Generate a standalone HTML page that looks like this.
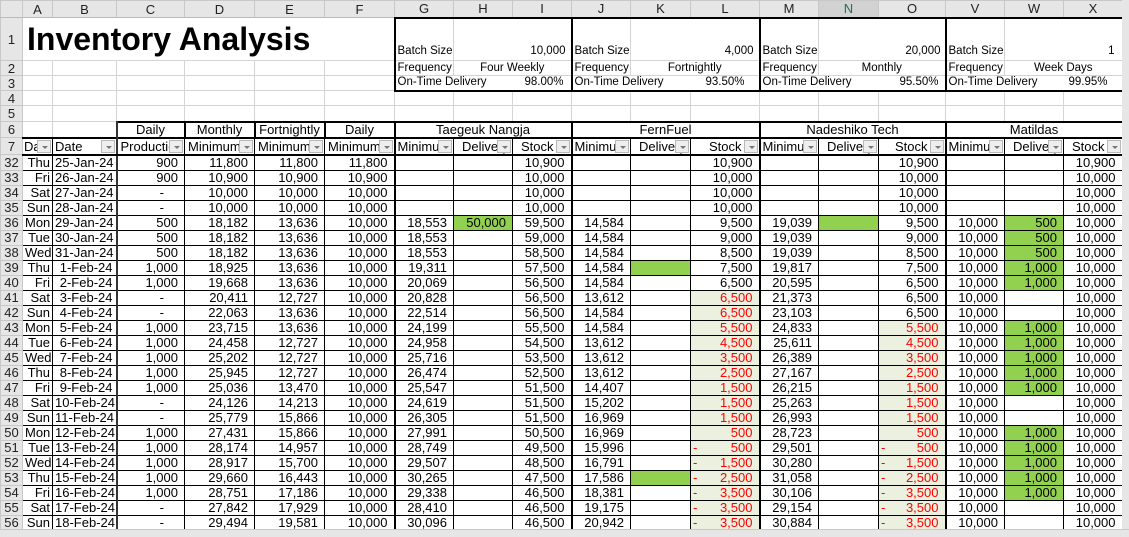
<!DOCTYPE html>
<html><head><meta charset="utf-8"><style>
body{margin:0;width:1129px;height:536px;overflow:hidden;background:#fff;font-family:"Liberation Sans",Arial,sans-serif;position:relative}
table{border-collapse:collapse;table-layout:fixed;position:absolute;left:0;top:0;width:1122px}
td,th{padding:0 2px;white-space:nowrap;overflow:hidden;font-size:13px;line-height:13px;font-weight:normal;position:relative}
th{background:#e6e6e6;color:#222;border:1px solid #c8c8c8;text-align:center;font-size:13px;padding:0}
tr.hd th{border-bottom:1px solid #bbb}
th.sel{background:#d2d2d2;color:#217346;border-bottom:2px solid #217346}
td{border:1px solid #d4d4d4}
tr.d td{border:1px solid #000;text-align:right;height:14px;padding-right:6px}
tr.d td:nth-child(2){padding-right:2px}
tr.d td:nth-child(3){border-right:2px solid #333;padding-right:3px}
tr.d td:nth-child(8),tr.d td:nth-child(11),tr.d td:nth-child(14),tr.d td:nth-child(17),tr.h7 td:nth-child(8),tr.h7 td:nth-child(11),tr.h7 td:nth-child(14),tr.h7 td:nth-child(17){border-left:2px solid #000}
tr.d td:nth-child(19),tr.h7 td:nth-child(19){border-right:2px solid #000}
tr.h7 td{border:1px solid #000;border-bottom:2px solid #000;border-top:2px solid #000;padding-right:17px}
tr.h7 td:nth-child(3){border-right:2px solid #333}
.f{position:absolute;right:1px;top:1px;width:14px;height:13px;background:#eceeef;border:1px solid #b8b8b8;box-sizing:border-box}
.f:after{content:"";position:absolute;left:4px;top:5px;border-left:3px solid transparent;border-right:3px solid transparent;border-top:3px solid #777}
.g{background:#92d050}
.s{background:#ebf1de;color:#f00}
.m{float:left;color:#f00}
.t6 td.k{border:2px solid #000;border-bottom:1px solid #000;text-align:center}
.sm{font-size:11.5px;padding-left:2px;overflow:visible}
tr.d td.dash{padding-right:20px}
</style></head><body>
<table>
<colgroup><col style="width:22px"><col style="width:30px"><col style="width:64px"><col style="width:68px"><col style="width:70px"><col style="width:70px"><col style="width:70px"><col style="width:59px"><col style="width:59px"><col style="width:59px"><col style="width:59px"><col style="width:60px"><col style="width:69px"><col style="width:59px"><col style="width:60px"><col style="width:67px"><col style="width:59px"><col style="width:59px"><col style="width:59px"></colgroup>
<tr class="hd" style="height:17px"><th style="background:#e6e6e6"></th><th>A</th><th>B</th><th>C</th><th>D</th><th>E</th><th>F</th><th>G</th><th>H</th><th>I</th><th>J</th><th>K</th><th>L</th><th>M</th><th class="sel">N</th><th>O</th><th>V</th><th>W</th><th>X</th></tr>
<tr style="height:43px"><th>1</th><td colspan="6" style="font-size:32px;font-weight:bold;line-height:32px;padding:0 0 0 4px;vertical-align:middle;border-right:none">Inventory Analysis</td>
<td class="sm" style="border-left:2px solid #000;border-top:2px solid #000;vertical-align:bottom;padding-bottom:2px">Batch Size</td><td colspan="2" class="sm" style="text-align:right;border-top:2px solid #000;border-right:2px solid #000;vertical-align:bottom;padding:0 5px 2px 0">10,000</td>
<td class="sm" style="border-top:2px solid #000;vertical-align:bottom;padding-bottom:2px">Batch Size</td><td colspan="2" class="sm" style="text-align:right;border-top:2px solid #000;border-right:2px solid #000;vertical-align:bottom;padding:0 5px 2px 0">4,000</td>
<td class="sm" style="border-top:2px solid #000;vertical-align:bottom;padding-bottom:2px">Batch Size</td><td colspan="2" class="sm" style="text-align:right;border-top:2px solid #000;border-right:2px solid #000;vertical-align:bottom;padding:0 4px 2px 0">20,000</td>
<td class="sm" style="border-top:2px solid #000;vertical-align:bottom;padding-bottom:2px">Batch Size</td><td colspan="2" class="sm" style="text-align:right;border-top:2px solid #000;border-right:2px solid #000;vertical-align:bottom;padding:0 7px 2px 0">1</td></tr>
<tr style="height:15px"><th>2</th><td></td><td></td><td></td><td></td><td></td><td></td>
<td class="sm" style="border-left:2px solid #000">Frequency</td><td colspan="2" class="sm" style="text-align:center;border-right:2px solid #000">Four Weekly</td>
<td class="sm">Frequency</td><td colspan="2" class="sm" style="text-align:center;border-right:2px solid #000">Fortnightly</td>
<td class="sm">Frequency</td><td colspan="2" class="sm" style="text-align:center;border-right:2px solid #000">Monthly</td>
<td class="sm">Frequency</td><td colspan="2" class="sm" style="text-align:center;border-right:2px solid #000">Week Days</td></tr>
<tr style="height:15px"><th>3</th><td></td><td></td><td></td><td></td><td></td><td></td>
<td colspan="2" class="sm" style="border-left:2px solid #000;border-bottom:2px solid #000;border-right:none">On-Time Delivery</td><td class="sm" style="text-align:right;border-right:2px solid #000;border-bottom:2px solid #000;border-left:none;padding-right:7px">98.00%</td>
<td colspan="2" class="sm" style="border-bottom:2px solid #000;border-right:none">On-Time Delivery</td><td class="sm" style="text-align:right;border-right:2px solid #000;border-bottom:2px solid #000;border-left:none;padding-right:14px">93.50%</td>
<td colspan="2" class="sm" style="border-bottom:2px solid #000;border-right:none">On-Time Delivery</td><td class="sm" style="text-align:right;border-right:2px solid #000;border-bottom:2px solid #000;border-left:none;padding-right:6px">95.50%</td>
<td colspan="2" class="sm" style="border-bottom:2px solid #000;border-right:none">On-Time Delivery</td><td class="sm" style="text-align:right;border-right:2px solid #000;border-bottom:2px solid #000;border-left:none;padding-right:14px">99.95%</td></tr>
<tr style="height:15px"><th>4</th><td></td><td></td><td></td><td></td><td></td><td></td><td></td><td></td><td></td><td></td><td></td><td></td><td></td><td></td><td></td><td></td><td></td><td></td></tr>
<tr style="height:16px"><th>5</th><td></td><td></td><td></td><td></td><td></td><td></td><td></td><td></td><td></td><td></td><td></td><td></td><td></td><td></td><td></td><td></td><td></td><td></td></tr>
<tr class="t6" style="height:16px"><th>6</th><td></td><td style="border-right:2px solid #333"></td><td class="k">Daily</td><td class="k">Monthly</td><td class="k">Fortnightly</td><td class="k">Daily</td><td colspan="3" class="k">Taegeuk Nangja</td><td colspan="3" class="k">FernFuel</td><td colspan="3" class="k">Nadeshiko Tech</td><td colspan="3" class="k">Matildas</td></tr>
<tr class="h7" style="height:17px"><th>7</th><td style="text-align:left;padding-left:1px">Da<span class="f"></span></td><td style="text-align:left">Date<span class="f"></span></td><td style="text-align:left;padding-left:3px">Productio<span class="f"></span></td><td style="text-align:left;padding-left:3px">Minimum<span class="f"></span></td><td style="text-align:left;padding-left:3px">Minimum<span class="f"></span></td><td style="text-align:left;padding-left:3px">Minimum<span class="f"></span></td><td style="text-align:left">Minimum<span class="f"></span></td><td style="text-align:left;padding-left:8px">Delivery<span class="f"></span></td><td style="text-align:right">Stock<span class="f"></span></td><td style="text-align:left">Minimum<span class="f"></span></td><td style="text-align:left;padding-left:8px">Delivery<span class="f"></span></td><td style="text-align:right">Stock<span class="f"></span></td><td style="text-align:left">Minimum<span class="f"></span></td><td style="text-align:left;padding-left:8px">Delivery<span class="f"></span></td><td style="text-align:right">Stock<span class="f"></span></td><td style="text-align:left">Minimum<span class="f"></span></td><td style="text-align:left;padding-left:8px">Delivery<span class="f"></span></td><td style="text-align:right">Stock<span class="f"></span></td></tr>
<tr class="d"><th>32</th><td>Thu</td><td>25-Jan-24</td><td>900</td><td>11,800</td><td>11,800</td><td>11,800</td><td></td><td></td><td>10,900</td><td></td><td></td><td>10,900</td><td></td><td></td><td>10,900</td><td></td><td></td><td>10,900</td></tr>
<tr class="d"><th>33</th><td>Fri</td><td>26-Jan-24</td><td>900</td><td>10,900</td><td>10,900</td><td>10,900</td><td></td><td></td><td>10,000</td><td></td><td></td><td>10,000</td><td></td><td></td><td>10,000</td><td></td><td></td><td>10,000</td></tr>
<tr class="d"><th>34</th><td>Sat</td><td>27-Jan-24</td><td class="dash">-</td><td>10,000</td><td>10,000</td><td>10,000</td><td></td><td></td><td>10,000</td><td></td><td></td><td>10,000</td><td></td><td></td><td>10,000</td><td></td><td></td><td>10,000</td></tr>
<tr class="d"><th>35</th><td>Sun</td><td>28-Jan-24</td><td class="dash">-</td><td>10,000</td><td>10,000</td><td>10,000</td><td></td><td></td><td>10,000</td><td></td><td></td><td>10,000</td><td></td><td></td><td>10,000</td><td></td><td></td><td>10,000</td></tr>
<tr class="d"><th>36</th><td>Mon</td><td>29-Jan-24</td><td>500</td><td>18,182</td><td>13,636</td><td>10,000</td><td>18,553</td><td class="g">50,000</td><td>59,500</td><td>14,584</td><td></td><td>9,500</td><td>19,039</td><td class="g"></td><td>9,500</td><td>10,000</td><td class="g">500</td><td>10,000</td></tr>
<tr class="d"><th>37</th><td>Tue</td><td>30-Jan-24</td><td>500</td><td>18,182</td><td>13,636</td><td>10,000</td><td>18,553</td><td></td><td>59,000</td><td>14,584</td><td></td><td>9,000</td><td>19,039</td><td></td><td>9,000</td><td>10,000</td><td class="g">500</td><td>10,000</td></tr>
<tr class="d"><th>38</th><td>Wed</td><td>31-Jan-24</td><td>500</td><td>18,182</td><td>13,636</td><td>10,000</td><td>18,553</td><td></td><td>58,500</td><td>14,584</td><td></td><td>8,500</td><td>19,039</td><td></td><td>8,500</td><td>10,000</td><td class="g">500</td><td>10,000</td></tr>
<tr class="d"><th>39</th><td>Thu</td><td>1-Feb-24</td><td>1,000</td><td>18,925</td><td>13,636</td><td>10,000</td><td>19,311</td><td></td><td>57,500</td><td>14,584</td><td class="g"></td><td>7,500</td><td>19,817</td><td></td><td>7,500</td><td>10,000</td><td class="g">1,000</td><td>10,000</td></tr>
<tr class="d"><th>40</th><td>Fri</td><td>2-Feb-24</td><td>1,000</td><td>19,668</td><td>13,636</td><td>10,000</td><td>20,069</td><td></td><td>56,500</td><td>14,584</td><td></td><td>6,500</td><td>20,595</td><td></td><td>6,500</td><td>10,000</td><td class="g">1,000</td><td>10,000</td></tr>
<tr class="d"><th>41</th><td>Sat</td><td>3-Feb-24</td><td class="dash">-</td><td>20,411</td><td>12,727</td><td>10,000</td><td>20,828</td><td></td><td>56,500</td><td>13,612</td><td></td><td class="s">6,500</td><td>21,373</td><td></td><td>6,500</td><td>10,000</td><td></td><td>10,000</td></tr>
<tr class="d"><th>42</th><td>Sun</td><td>4-Feb-24</td><td class="dash">-</td><td>22,063</td><td>13,636</td><td>10,000</td><td>22,514</td><td></td><td>56,500</td><td>14,584</td><td></td><td class="s">6,500</td><td>23,103</td><td></td><td>6,500</td><td>10,000</td><td></td><td>10,000</td></tr>
<tr class="d"><th>43</th><td>Mon</td><td>5-Feb-24</td><td>1,000</td><td>23,715</td><td>13,636</td><td>10,000</td><td>24,199</td><td></td><td>55,500</td><td>14,584</td><td></td><td class="s">5,500</td><td>24,833</td><td></td><td class="s">5,500</td><td>10,000</td><td class="g">1,000</td><td>10,000</td></tr>
<tr class="d"><th>44</th><td>Tue</td><td>6-Feb-24</td><td>1,000</td><td>24,458</td><td>12,727</td><td>10,000</td><td>24,958</td><td></td><td>54,500</td><td>13,612</td><td></td><td class="s">4,500</td><td>25,611</td><td></td><td class="s">4,500</td><td>10,000</td><td class="g">1,000</td><td>10,000</td></tr>
<tr class="d"><th>45</th><td>Wed</td><td>7-Feb-24</td><td>1,000</td><td>25,202</td><td>12,727</td><td>10,000</td><td>25,716</td><td></td><td>53,500</td><td>13,612</td><td></td><td class="s">3,500</td><td>26,389</td><td></td><td class="s">3,500</td><td>10,000</td><td class="g">1,000</td><td>10,000</td></tr>
<tr class="d"><th>46</th><td>Thu</td><td>8-Feb-24</td><td>1,000</td><td>25,945</td><td>12,727</td><td>10,000</td><td>26,474</td><td></td><td>52,500</td><td>13,612</td><td></td><td class="s">2,500</td><td>27,167</td><td></td><td class="s">2,500</td><td>10,000</td><td class="g">1,000</td><td>10,000</td></tr>
<tr class="d"><th>47</th><td>Fri</td><td>9-Feb-24</td><td>1,000</td><td>25,036</td><td>13,470</td><td>10,000</td><td>25,547</td><td></td><td>51,500</td><td>14,407</td><td></td><td class="s">1,500</td><td>26,215</td><td></td><td class="s">1,500</td><td>10,000</td><td class="g">1,000</td><td>10,000</td></tr>
<tr class="d"><th>48</th><td>Sat</td><td>10-Feb-24</td><td class="dash">-</td><td>24,126</td><td>14,213</td><td>10,000</td><td>24,619</td><td></td><td>51,500</td><td>15,202</td><td></td><td class="s">1,500</td><td>25,263</td><td></td><td class="s">1,500</td><td>10,000</td><td></td><td>10,000</td></tr>
<tr class="d"><th>49</th><td>Sun</td><td>11-Feb-24</td><td class="dash">-</td><td>25,779</td><td>15,866</td><td>10,000</td><td>26,305</td><td></td><td>51,500</td><td>16,969</td><td></td><td class="s">1,500</td><td>26,993</td><td></td><td class="s">1,500</td><td>10,000</td><td></td><td>10,000</td></tr>
<tr class="d"><th>50</th><td>Mon</td><td>12-Feb-24</td><td>1,000</td><td>27,431</td><td>15,866</td><td>10,000</td><td>27,991</td><td></td><td>50,500</td><td>16,969</td><td></td><td class="s">500</td><td>28,723</td><td></td><td class="s">500</td><td>10,000</td><td class="g">1,000</td><td>10,000</td></tr>
<tr class="d"><th>51</th><td>Tue</td><td>13-Feb-24</td><td>1,000</td><td>28,174</td><td>14,957</td><td>10,000</td><td>28,749</td><td></td><td>49,500</td><td>15,996</td><td></td><td class="s"><span class="m">-</span>500</td><td>29,501</td><td></td><td class="s"><span class="m">-</span>500</td><td>10,000</td><td class="g">1,000</td><td>10,000</td></tr>
<tr class="d"><th>52</th><td>Wed</td><td>14-Feb-24</td><td>1,000</td><td>28,917</td><td>15,700</td><td>10,000</td><td>29,507</td><td></td><td>48,500</td><td>16,791</td><td></td><td class="s"><span class="m">-</span>1,500</td><td>30,280</td><td></td><td class="s"><span class="m">-</span>1,500</td><td>10,000</td><td class="g">1,000</td><td>10,000</td></tr>
<tr class="d"><th>53</th><td>Thu</td><td>15-Feb-24</td><td>1,000</td><td>29,660</td><td>16,443</td><td>10,000</td><td>30,265</td><td></td><td>47,500</td><td>17,586</td><td class="g"></td><td class="s"><span class="m">-</span>2,500</td><td>31,058</td><td></td><td class="s"><span class="m">-</span>2,500</td><td>10,000</td><td class="g">1,000</td><td>10,000</td></tr>
<tr class="d"><th>54</th><td>Fri</td><td>16-Feb-24</td><td>1,000</td><td>28,751</td><td>17,186</td><td>10,000</td><td>29,338</td><td></td><td>46,500</td><td>18,381</td><td></td><td class="s"><span class="m">-</span>3,500</td><td>30,106</td><td></td><td class="s"><span class="m">-</span>3,500</td><td>10,000</td><td class="g">1,000</td><td>10,000</td></tr>
<tr class="d"><th>55</th><td>Sat</td><td>17-Feb-24</td><td class="dash">-</td><td>27,842</td><td>17,929</td><td>10,000</td><td>28,410</td><td></td><td>46,500</td><td>19,175</td><td></td><td class="s"><span class="m">-</span>3,500</td><td>29,154</td><td></td><td class="s"><span class="m">-</span>3,500</td><td>10,000</td><td></td><td>10,000</td></tr>
<tr class="d"><th>56</th><td>Sun</td><td>18-Feb-24</td><td class="dash">-</td><td>29,494</td><td>19,581</td><td>10,000</td><td>30,096</td><td></td><td>46,500</td><td>20,942</td><td></td><td class="s"><span class="m">-</span>3,500</td><td>30,884</td><td></td><td class="s"><span class="m">-</span>3,500</td><td>10,000</td><td></td><td>10,000</td></tr>
</table>
<div style="position:absolute;left:1122px;top:0;width:7px;height:536px;background:#e6e6e6"></div>
<div style="position:absolute;left:0;top:529px;width:1129px;height:7px;background:#e6e6e6;border-top:1px solid #c8c8c8"></div>
</body></html>
